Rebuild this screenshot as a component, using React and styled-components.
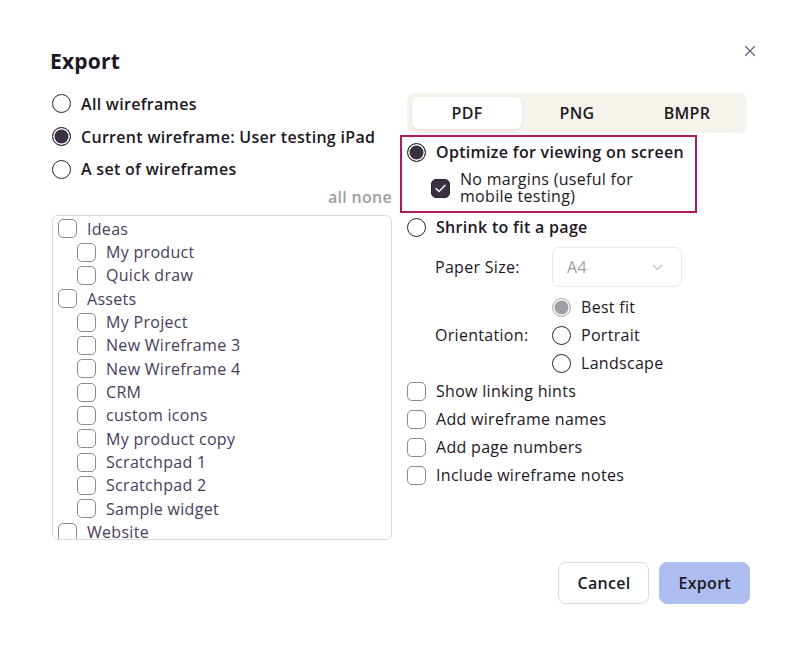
import React, { useState } from "react";
import styled, { createGlobalStyle } from "styled-components";

const Global = createGlobalStyle`
  html, body { margin: 0; padding: 0; background: #fff; }
  body { font-family: "Open Sans", "Liberation Sans", sans-serif; color: #1e1724; }
  * { box-sizing: border-box; }
`;

const Dialog = styled.div`
  width: 800px;
  height: 653px;
  padding: 46px 50px 0 50px;
  display: flex;
  flex-direction: column;
`;

const Header = styled.div`
  display: flex;
  justify-content: space-between;
  align-items: flex-start;
  height: 41px;
`;

const Title = styled.h1`
  margin: 0;
  font-size: 21px;
  font-weight: 700;
  line-height: 30px;
  letter-spacing: 0.2px;
  color: #1e1724;
`;

const Close = styled.button`
  border: 0;
  background: none;
  padding: 0;
  margin: -1px -6px 0 0;
  width: 12px;
  height: 12px;
  display: flex;
  cursor: pointer;
`;

const Columns = styled.div`
  display: grid;
  grid-template-columns: 342px 1fr;
  column-gap: 8px;
`;

const LeftCol = styled.div`
  display: flex;
  flex-direction: column;
  padding-left: 2px;
`;

const RightCol = styled.div`
  display: flex;
  flex-direction: column;
  padding: 6px 0 0 7px;
`;

const Row = styled.label`
  display: flex;
  align-items: center;
  gap: 10px;
  height: ${p => p.h || 28}px;
  padding-left: ${p => p.indent || 0}px;
  font-size: 16px;
  letter-spacing: 0.3px;
  font-weight: ${p => (p.bold ? 600 : 400)};
  color: ${p => p.color || "#1e1724"};
  cursor: pointer;
  flex-shrink: 0;
  white-space: nowrap;
`;

const Radio = styled.span`
  width: 19px;
  height: 19px;
  border-radius: 50%;
  flex-shrink: 0;
  border: 1.5px solid ${p => (p.grey ? "#b9b5bd" : "#2a2230")};
  background: ${p => (p.on ? (p.grey ? "#a29ea6" : "#3a3042") : "#fff")};
  box-shadow: ${p => (p.on ? "inset 0 0 0 1.5px #fff" : "none")};
`;

const Box = styled.span`
  width: 19px;
  height: 19px;
  border-radius: 5px;
  flex-shrink: 0;
  border: 1.5px solid ${p => (p.on ? "#2a2230" : "#8e8894")};
  background: ${p => (p.on ? "#3a3042" : "#fff")};
  display: flex;
  align-items: center;
  justify-content: center;
`;

const AllNone = styled.div`
  align-self: flex-end;
  font-size: 16px;
  letter-spacing: 0.3px;
  font-weight: 600;
  color: #a19da4;
  height: 24px;
  line-height: 24px;
`;

const List = styled.div`
  margin-top: 6px;
  height: 325px;
  border: 1px solid #dcd9de;
  border-radius: 6px;
  padding: 1px 5px;
  overflow: hidden;
  display: flex;
  flex-direction: column;
`;

const Tabs = styled.div`
  width: 340px;
  height: 40px;
  background: #f6f2ec;
  border-radius: 8px;
  padding: 4px 5px;
  display: grid;
  grid-template-columns: repeat(3, 1fr);
`;

const Tab = styled.button`
  border: 0;
  border-radius: 7px;
  background: ${p => (p.active ? "#fff" : "transparent")};
  box-shadow: ${p => (p.active ? "0 1px 3px rgba(40,30,50,0.12)" : "none")};
  font-family: inherit;
  font-size: 16px;
  letter-spacing: 0.3px;
  font-weight: 600;
  color: #1e1724;
  cursor: pointer;
`;

const Highlight = styled.div`
  margin: 2px 0 0 -7px;
  width: 297px;
  height: 78px;
  border: 2px solid #b01a5b;
  padding: 0 5px;
  display: flex;
  flex-direction: column;
`;

const TwoLine = styled.span`
  line-height: 17px;
  white-space: normal;
`;

const Indented = styled.div`
  padding-left: 28px;
  display: flex;
  flex-direction: column;
`;

const FieldRow = styled.div`
  display: grid;
  grid-template-columns: 117px 1fr;
  align-items: center;
  margin-top: ${p => p.mt || 0}px;
  font-size: 16px;
  letter-spacing: 0.3px;
  color: #1e1724;
`;

const Select = styled.div`
  width: 130px;
  height: 40px;
  border: 1px solid #ebe8ec;
  border-radius: 7px;
  padding: 0 18px 0 14px;
  display: flex;
  align-items: center;
  justify-content: space-between;
  color: #a29ea6;
`;

const RadioStack = styled.div`
  display: flex;
  flex-direction: column;
`;

const Footer = styled.div`
  margin-top: auto;
  margin-bottom: 49px;
  display: flex;
  justify-content: flex-end;
  gap: 10px;
`;

const Button = styled.button`
  height: 42px;
  padding: 0 18px;
  border-radius: 8px;
  border: 1px solid ${p => (p.primary ? "#adbdf0" : "#dcd9de")};
  background: ${p => (p.primary ? "#adbdf0" : "#fff")};
  font-family: inherit;
  font-size: 16px;
  letter-spacing: 0.3px;
  font-weight: 600;
  color: #1e1724;
  cursor: pointer;
`;

const Check = () => (
  <svg width="11" height="9" viewBox="0 0 11 9">
    <path d="M1 4.6 L4 7.4 L10 1.3" fill="none" stroke="#fff" strokeWidth="1.4" strokeLinecap="round" strokeLinejoin="round" />
  </svg>
);

const items = [
  ["Ideas", 0],
  ["My product", 1],
  ["Quick draw", 1],
  ["Assets", 0],
  ["My Project", 1],
  ["New Wireframe 3", 1],
  ["New Wireframe 4", 1],
  ["CRM", 1],
  ["custom icons", 1],
  ["My product copy", 1],
  ["Scratchpad 1", 1],
  ["Scratchpad 2", 1],
  ["Sample widget", 1],
  ["Website", 0],
];

export default function App() {
  const [tab, setTab] = useState("PDF");
  return (
    <Dialog>
      <Global />
      <Header>
        <Title>Export</Title>
        <Close aria-label="Close">
          <svg width="12" height="12" viewBox="0 0 12 12">
            <path d="M1.5 1.5 L10.5 10.5 M10.5 1.5 L1.5 10.5" stroke="#6b5f80" strokeWidth="1.2" strokeLinecap="round" />
          </svg>
        </Close>
      </Header>
      <Columns>
        <LeftCol>
          <Row h={33} bold><Radio />All wireframes</Row>
          <Row h={33} bold><Radio on />Current wireframe: User testing iPad</Row>
          <Row h={32} bold><Radio />A set of wireframes</Row>
          <AllNone>all none</AllNone>
          <List>
            {items.map(([name, lvl]) => (
              <Row key={name} h={23.35} indent={lvl * 19} color="#4b3b5c">
                <Box />
                {name}
              </Row>
            ))}
          </List>
        </LeftCol>
        <RightCol>
          <Tabs>
            {["PDF", "PNG", "BMPR"].map(t => (
              <Tab key={t} active={tab === t} onClick={() => setTab(t)}>{t}</Tab>
            ))}
          </Tabs>
          <Highlight>
            <Row h={30} bold><Radio on />Optimize for viewing on screen</Row>
            <Row h={42} indent={24}>
              <Box on><Check /></Box>
              <TwoLine>No margins (useful for<br />mobile testing)</TwoLine>
            </Row>
          </Highlight>
          <Row h={28} bold><Radio />Shrink to fit a page</Row>
          <Indented>
            <FieldRow mt={6}>
              <span>Paper Size:</span>
              <Select>
                A4
                <svg width="11" height="7" viewBox="0 0 11 7">
                  <path d="M1 1 L5.5 5.5 L10 1" fill="none" stroke="#c3bfc6" strokeWidth="1.1" />
                </svg>
              </Select>
            </FieldRow>
            <FieldRow mt={6}>
              <span>Orientation:</span>
              <RadioStack>
                <Row h={28}><Radio on grey />Best fit</Row>
                <Row h={28}><Radio />Portrait</Row>
                <Row h={28}><Radio />Landscape</Row>
              </RadioStack>
            </FieldRow>
          </Indented>
          <Row h={28}><Box />Show linking hints</Row>
          <Row h={28}><Box />Add wireframe names</Row>
          <Row h={28}><Box />Add page numbers</Row>
          <Row h={28}><Box />Include wireframe notes</Row>
        </RightCol>
      </Columns>
      <Footer>
        <Button>Cancel</Button>
        <Button primary>Export</Button>
      </Footer>
    </Dialog>
  );
}
